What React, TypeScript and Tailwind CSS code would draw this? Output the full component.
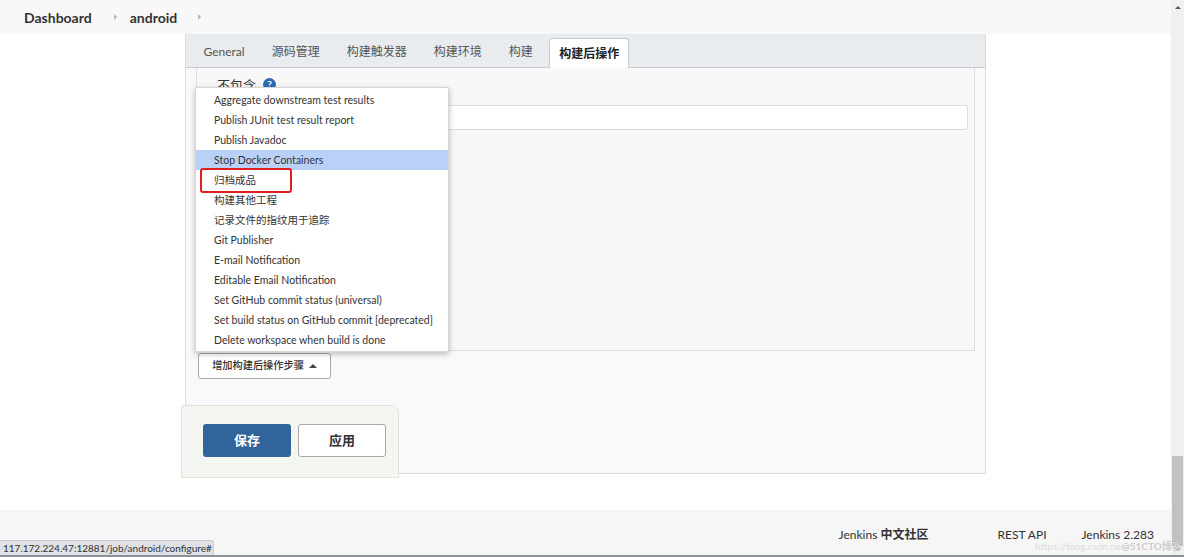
const menuItems = [
  "Aggregate downstream test results",
  "Publish JUnit test result report",
  "Publish Javadoc",
  "Stop Docker Containers",
  "归档成品",
  "构建其他工程",
  "记录文件的指纹用于追踪",
  "Git Publisher",
  "E-mail Notification",
  "Editable Email Notification",
  "Set GitHub commit status (universal)",
  "Set build status on GitHub commit [deprecated]",
  "Delete workspace when build is done",
];

const tabs = ["General", "源码管理", "构建触发器", "构建环境", "构建"];

function Crumb() {
  return <span className="w-0 h-0 border-y-[3px] border-y-transparent border-l-[3px] border-l-[#b5b5b5]" />;
}

function Header() {
  return (
    <div className="h-[34px] bg-[#f8f8f8] flex items-center pl-6 text-[14px] font-bold text-[#333]">
      <span>Dashboard</span>
      <span className="ml-[22px] mr-[13px] flex items-center">
        <Crumb />
      </span>
      <span>android</span>
      <span className="ml-[21px] flex items-center">
        <Crumb />
      </span>
    </div>
  );
}

function TabBar() {
  return (
    <div className="h-[34px] bg-[#e9ecef] border-b border-[#c8ccd1] flex items-end pl-[4px] text-[12px] text-[#555]">
      {tabs.map((t) => (
        <div key={t} className="h-[33px] px-[13.5px] pt-[3px] flex items-center">
          {t}
        </div>
      ))}
      <div className="h-[30px] ml-[3px] px-[9px] flex items-center bg-white border border-b-0 border-[#c8ccd1] rounded-t-[4px] font-bold text-[#222] -mb-px">
        构建后操作
      </div>
    </div>
  );
}

function Dropdown() {
  return (
    <div className="absolute left-[195px] top-[87px] w-[254px] bg-white border border-[#d6d6d6] shadow-[0_2px_6px_rgba(0,0,0,0.25)] pt-[2px] pb-px text-[10.5px] text-[#333]">
      {menuItems.map((m) => (
        <div
          key={m}
          className={`h-[20px] flex items-center pl-[18px] pt-px whitespace-nowrap ${m === "Stop Docker Containers" ? "bg-[#b9d1f7]" : ""}`}
        >
          {m}
        </div>
      ))}
      <div className="absolute left-[4px] top-[80px] w-[92px] h-[25px] border-2 border-[#e0201f] rounded-[3px]" />
    </div>
  );
}

function ConfigPanel() {
  return (
    <div className="ml-[185px] w-[801px] h-[440px] border border-t-0 border-[#dcdcdc] bg-[#f9f9f9] flex flex-col">
      <TabBar />
      <div className="px-[10px] flex flex-col">
        <div className="h-[283px] border-x border-b border-[#dedede] bg-[#f8f8f8] flex flex-col">
          <div className="h-[37px] pl-[20px] pt-[8px] flex items-start gap-[7px] text-[13px] text-[#333]">
            <span>不包含</span>
            <span className="mt-[2px] w-[13px] h-[13px] rounded-full bg-[#2d6cb5] text-white text-[10px] font-bold flex items-center justify-center">
              ?
            </span>
          </div>
          <div className="ml-[3px] mr-[6px] h-[25px] bg-white border border-[#dcdcdc] rounded-[2px]" />
        </div>
        <div className="mt-[2px] ml-[2px] w-[133px] h-[26px] bg-white border border-[#a8a8a8] rounded-[3px] flex items-center justify-center gap-[5px] text-[10.2px] font-medium text-[#333]">
          <span>增加构建后操作步骤</span>
          <span className="w-0 h-0 border-x-[4px] border-x-transparent border-b-[4px] border-b-[#444]" />
        </div>
        <div className="mt-[26px] -ml-[15px] w-[218px] h-[73px] bg-[#f4f7f1] border border-[#dde6d6] rounded-tr-[8px] rounded-tl-[3px] flex items-start pl-[21px] pt-[18px] gap-[7px]">
          <div className="w-[88px] h-[33px] bg-[#31649a] rounded-[3px] text-white text-[13px] font-bold flex items-center justify-center">
            保存
          </div>
          <div className="w-[88px] h-[33px] bg-white border border-[#a8a8a8] rounded-[3px] text-[#333] text-[13px] font-bold flex items-center justify-center">
            应用
          </div>
        </div>
      </div>
    </div>
  );
}

function Footer() {
  return (
    <div className="h-[45px] bg-[#f6f6f6] flex items-center justify-end pr-[17px] pt-[5px] text-[12px] text-[#333]">
      <span>
        Jenkins <b>中文社区</b>
      </span>
      <span className="ml-[69px]">REST API</span>
      <span className="ml-[35px]">Jenkins 2.283</span>
    </div>
  );
}

function Scrollbar() {
  return (
    <div className="w-[13px] h-full bg-[#f0f0f0] flex flex-col items-center">
      <span className="mt-[6px] w-0 h-0 border-x-[3px] border-x-transparent border-b-[3px] border-b-[#555]" />
      <div className="flex-1" />
      <div className="w-[11px] h-[90px] bg-[#c1c1c1]" />
      <span className="mt-[2px] mb-[4px] w-0 h-0 border-x-[3px] border-x-transparent border-t-[3px] border-t-[#999]" />
    </div>
  );
}

export default function App() {
  return (
    <div className="relative w-[1184px] h-[557px] overflow-hidden bg-white font-['Lato','Noto_Sans_CJK_SC',sans-serif] flex flex-col">
      <div className="flex flex-1 min-h-0">
        <div className="flex-1 flex flex-col">
          <Header />
          <ConfigPanel />
          <div className="h-[36px]" />
          <Footer />
        </div>
        <Scrollbar />
      </div>
      <div className="h-[2px] bg-[#8d9096]" />

      <Dropdown />

      <div className="absolute left-0 bottom-[2px] h-[15px] w-[214px] bg-[#dee1e6] border-t border-r border-[#c9ccd1] rounded-tr-[3px] text-[10px] text-[#333] pl-[3px] flex items-center whitespace-nowrap">
        117.172.224.47:12881/job/android/configure#
      </div>

      <div className="absolute left-[1035px] top-[539px] text-[10px] text-[#dcdcdc] flex items-center whitespace-nowrap">
        <span>https://blog.csdn.ne</span>
        <span className="font-bold text-[#cdcdcd]">@51CTO博客</span>
      </div>
    </div>
  );
}
